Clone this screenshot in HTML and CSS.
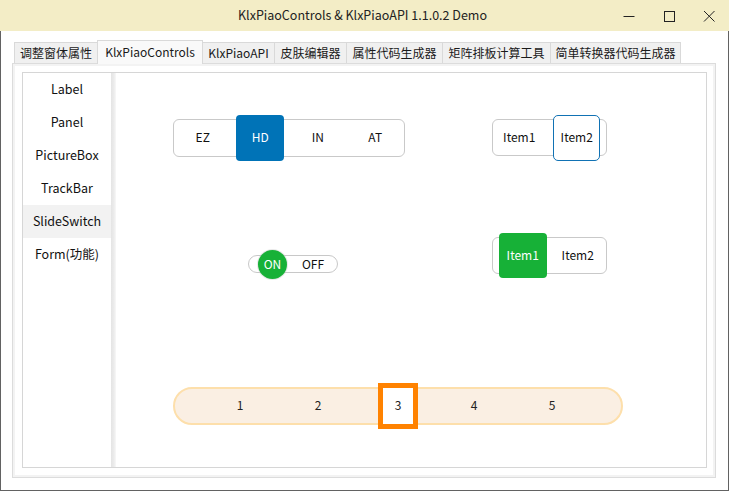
FILE: index.html
```html
<!DOCTYPE html>
<html>
<head>
<meta charset="utf-8">
<link rel="stylesheet" href="styles.css">
</head>
<body>
<div class="window">
  <div class="titlebar">
    <div class="title">KlxPiaoControls &amp; KlxPiaoAPI 1.1.0.2 Demo</div>
    <div class="ctrl"><svg width="12" height="12" viewBox="0 0 12 12"><path d="M0.5 6.5H11.5" stroke="#222" stroke-width="1"/></svg></div>
    <div class="ctrl"><svg width="12" height="12" viewBox="0 0 12 12"><rect x="1.5" y="1.5" width="10" height="10" fill="none" stroke="#222" stroke-width="1"/></svg></div>
    <div class="ctrl"><svg width="12" height="12" viewBox="0 0 12 12"><path d="M1 1L11.5 11.5M11.5 1L1 11.5" stroke="#222" stroke-width="1"/></svg></div>
  </div>
  <div class="client">
    <div class="tabs">
      <div class="tab w1">调整窗体属性</div>
      <div class="tab w2 active">KlxPiaoControls</div>
      <div class="tab w3">KlxPiaoAPI</div>
      <div class="tab w4">皮肤编辑器</div>
      <div class="tab w5">属性代码生成器</div>
      <div class="tab w6">矩阵排板计算工具</div>
      <div class="tab w7">简单转换器代码生成器</div>
    </div>
    <div class="page">
      <div class="panel">
        <div class="list">
          <div class="item">Label</div>
          <div class="item">Panel</div>
          <div class="item">PictureBox</div>
          <div class="item">TrackBar</div>
          <div class="item selected">SlideSwitch</div>
          <div class="item">Form(功能)</div>
        </div>
        <div class="sep"></div>
        <div class="content">
          <div class="row row1">
            <div class="seg seg-a">
              <div class="seg-item">EZ</div>
              <div class="seg-item"><span class="pill blue">HD</span></div>
              <div class="seg-item">IN</div>
              <div class="seg-item">AT</div>
            </div>
            <div class="seg seg-b">
              <div class="seg-item first">Item1</div>
              <div class="seg-item"><span class="pill outline">Item2</span></div>
            </div>
          </div>
          <div class="row row2">
            <div class="switch">
              <span class="knob">ON</span>
              <span class="off">OFF</span>
            </div>
            <div class="seg seg-c">
              <div class="seg-item"><span class="pill green">Item1</span></div>
              <div class="seg-item">Item2</div>
            </div>
          </div>
          <div class="row row3">
            <div class="bar">
              <div class="num">1</div>
              <div class="num">2</div>
              <div class="num"><span class="numsel">3</span></div>
              <div class="num">4</div>
              <div class="num">5</div>
            </div>
          </div>
        </div>
      </div>
    </div>
  </div>
</div>
</body>
</html>
```
FILE: styles.css
```css
* { box-sizing: border-box; }
html, body { margin: 0; padding: 0; background: #fff; }
body {
  font-family: "Noto Sans CJK SC", "Noto Sans", sans-serif;
  font-size: 12px;
  color: #1a1a1a;
}
.window {
  width: 729px;
  height: 491px;
  border: 1px solid #626262;
  border-top: none;
  display: flex;
  flex-direction: column;
  background: #fff;
}
.titlebar {
  height: 31px;
  background: #f3edc6;
  display: flex;
  align-items: center;
  margin: 0 -1px;
}
.title {
  flex: 1;
  text-align: center;
  padding-left: 116px;
  padding-bottom: 2px;
  font-size: 12.5px;
  color: #222;
}
.ctrl {
  width: 40px;
  height: 31px;
  display: flex;
  align-items: center;
  justify-content: center;
}
.client {
  flex: 1;
  padding: 9px 11px 11px 11px;
  display: flex;
  flex-direction: column;
}
.tabs {
  height: 23px;
  display: flex;
  align-items: flex-end;
  padding-left: 2px;
  position: relative;
  z-index: 2;
}
.tab {
  height: 21px;
  border: 1px solid #d9d9d9;
  border-bottom: none;
  background: #f0f0f0;
  margin-right: -1px;
  display: flex;
  align-items: center;
  justify-content: center;
  white-space: nowrap;
  font-size: 12px;
  color: #1a1a1a;
  padding-bottom: 1px;
}
.tab.active {
  height: 24px;
  margin-bottom: -1px;
  background: #f9f9f9;
  padding-bottom: 3px;
}
.w1 { width: 84px; }
.w2 { width: 106px; }
.w3 { width: 73px; }
.w4 { width: 73px; }
.w5 { width: 97px; }
.w6 { width: 109px; }
.w7 { width: 131px; }
.page {
  width: 704px;
  height: 415px;
  border: 1px solid #dcdcdc;
  box-shadow: inset 0 0 0 2px #f3f3f3;
  background: #fff;
  padding: 8px 8px 9px 9px;
}
.panel {
  height: 100%;
  border: 1px solid #d6d6d6;
  display: flex;
}
.list {
  width: 88px;
  display: flex;
  flex-direction: column;
}
.item {
  height: 33px;
  display: flex;
  align-items: center;
  justify-content: center;
  font-size: 12.5px;
  color: #111;
  padding-bottom: 2px;
}
.item.selected { background: #f2f2f2; }
.sep {
  width: 5px;
  background: linear-gradient(to right, #e4e4e4, #ececec 60%, #f8f8f8);
}
.content {
  flex: 1;
  display: flex;
  flex-direction: column;
}
.row { display: flex; align-items: flex-start; }
.row1 { margin-top: 46px; padding-left: 57px; }
.row2 { margin-top: 80px; padding-left: 132px; }
.row3 { margin-top: 113px; padding-left: 57px; }

.seg {
  border: 1px solid #c9c9c9;
  border-radius: 6px;
  display: flex;
  background: #fff;
}
.seg-a { width: 232px; height: 38px; }
.seg-b { width: 115px; height: 37px; margin-left: 87px; }
.seg-c { width: 115px; height: 37px; margin-left: 154px; }
.seg-item {
  flex: 1;
  display: flex;
  align-items: center;
  justify-content: center;
  font-size: 12px;
  color: #111;
  padding-bottom: 3px;
}
.seg-b .first { padding-right: 8px; }
.pill {
  width: 48px;
  height: 46px;
  flex: none;
  display: flex;
  align-items: center;
  justify-content: center;
  border-radius: 4px;
  margin-top: 3px;
  padding-bottom: 3px;
}
.pill.blue { background: #0073b7; color: #fff; }
.pill.outline {
  width: 47px;
  border: 1px solid #1172b4;
  background: #fff;
  border-radius: 5px;
  margin-left: -6px;
}
.pill.green { background: #17b137; color: #fff; margin-left: 3px; height: 45px; }

.switch {
  width: 90px;
  height: 18px;
  margin-top: 18px;
  border: 1px solid #c8c8c8;
  border-radius: 9px;
  display: flex;
  align-items: center;
  background: #fff;
}
.knob {
  width: 29px;
  height: 29px;
  flex: none;
  border-radius: 50%;
  background: #17b137;
  color: #fff;
  margin-left: 9px;
  display: flex;
  align-items: center;
  justify-content: center;
  font-size: 12px;
  padding-bottom: 2px;
  box-shadow: 0 0 0 1px rgba(200,200,200,0.4);
}
.off {
  flex: 1;
  text-align: center;
  padding-left: 2px;
  padding-bottom: 2px;
  font-size: 12px;
  color: #111;
}

.bar {
  width: 450px;
  height: 38px;
  border: 2px solid #fddfab;
  border-radius: 19px;
  background: #faefe3;
  display: flex;
  align-items: center;
  padding-left: 26px;
}
.num {
  width: 78px;
  display: flex;
  align-items: center;
  justify-content: center;
  font-size: 12px;
  color: #222;
  padding-bottom: 4px;
}
.numsel {
  width: 40px;
  height: 46px;
  border: 5px solid #ff8200;
  background: #fff;
  display: flex;
  align-items: center;
  justify-content: center;
  margin-left: 4px;
  margin-top: 4px;
  padding-bottom: 4px;
}
```
